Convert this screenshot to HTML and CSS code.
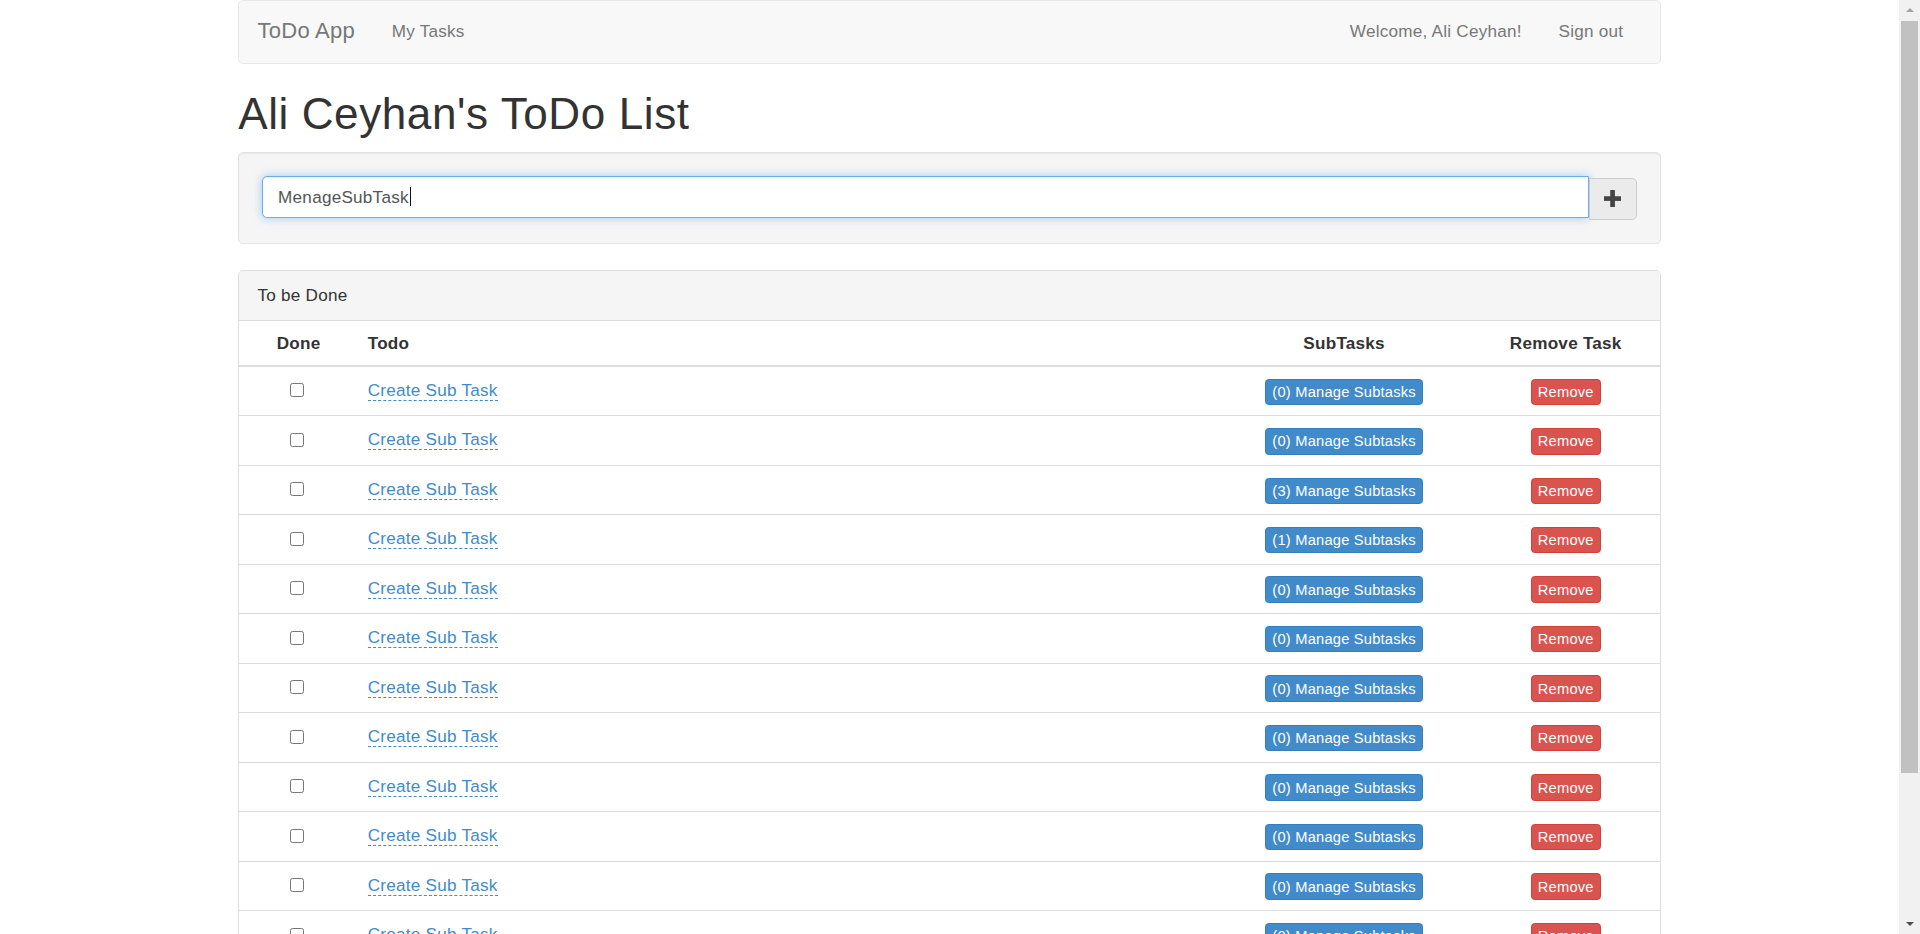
FILE: index.html
```html
<!DOCTYPE html>
<html lang="en">
<head>
<meta charset="utf-8">
<title>ToDo App</title>
<link rel="stylesheet" href="styles.css">
</head>
<body>
<div class="page">
  <div class="viewport">
    <div class="container">
      <nav class="navbar">
        <div class="nav-group">
          <a class="brand">ToDo App</a>
          <a class="nav-link">My Tasks</a>
        </div>
        <div class="nav-group">
          <a class="nav-link">Welcome, Ali Ceyhan!</a>
          <a class="nav-link">Sign out</a>
        </div>
      </nav>

      <h1 class="title">Ali Ceyhan's ToDo List</h1>

      <div class="well">
        <div class="input-group">
          <div class="form-control">MenageSubTask<span class="caret"></span></div>
          <button class="btn-add" type="button">
            <svg class="plus" viewBox="0 0 14 14" width="14" height="14"><rect x="0" y="5.1" width="14" height="3.8"/><rect x="5.1" y="0" width="3.8" height="14"/></svg>
          </button>
        </div>
      </div>

      <div class="panel">
        <div class="panel-heading">To be Done</div>
        <table class="table">
          <colgroup>
            <col class="c-done"><col><col class="c-sub"><col class="c-rm">
          </colgroup>
          <thead>
            <tr>
              <th class="center">Done</th>
              <th>Todo</th>
              <th class="center">SubTasks</th>
              <th class="center">Remove Task</th>
            </tr>
          </thead>
          <tbody>
            <tr><td><input class="chk" type="checkbox"></td><td><a class="editable">Create Sub Task</a></td><td class="center"><button class="btn btn-primary">(0) Manage Subtasks</button></td><td class="center"><button class="btn btn-danger">Remove</button></td></tr>
            <tr><td><input class="chk" type="checkbox"></td><td><a class="editable">Create Sub Task</a></td><td class="center"><button class="btn btn-primary">(0) Manage Subtasks</button></td><td class="center"><button class="btn btn-danger">Remove</button></td></tr>
            <tr><td><input class="chk" type="checkbox"></td><td><a class="editable">Create Sub Task</a></td><td class="center"><button class="btn btn-primary">(3) Manage Subtasks</button></td><td class="center"><button class="btn btn-danger">Remove</button></td></tr>
            <tr><td><input class="chk" type="checkbox"></td><td><a class="editable">Create Sub Task</a></td><td class="center"><button class="btn btn-primary">(1) Manage Subtasks</button></td><td class="center"><button class="btn btn-danger">Remove</button></td></tr>
            <tr><td><input class="chk" type="checkbox"></td><td><a class="editable">Create Sub Task</a></td><td class="center"><button class="btn btn-primary">(0) Manage Subtasks</button></td><td class="center"><button class="btn btn-danger">Remove</button></td></tr>
            <tr><td><input class="chk" type="checkbox"></td><td><a class="editable">Create Sub Task</a></td><td class="center"><button class="btn btn-primary">(0) Manage Subtasks</button></td><td class="center"><button class="btn btn-danger">Remove</button></td></tr>
            <tr><td><input class="chk" type="checkbox"></td><td><a class="editable">Create Sub Task</a></td><td class="center"><button class="btn btn-primary">(0) Manage Subtasks</button></td><td class="center"><button class="btn btn-danger">Remove</button></td></tr>
            <tr><td><input class="chk" type="checkbox"></td><td><a class="editable">Create Sub Task</a></td><td class="center"><button class="btn btn-primary">(0) Manage Subtasks</button></td><td class="center"><button class="btn btn-danger">Remove</button></td></tr>
            <tr><td><input class="chk" type="checkbox"></td><td><a class="editable">Create Sub Task</a></td><td class="center"><button class="btn btn-primary">(0) Manage Subtasks</button></td><td class="center"><button class="btn btn-danger">Remove</button></td></tr>
            <tr><td><input class="chk" type="checkbox"></td><td><a class="editable">Create Sub Task</a></td><td class="center"><button class="btn btn-primary">(0) Manage Subtasks</button></td><td class="center"><button class="btn btn-danger">Remove</button></td></tr>
            <tr><td><input class="chk" type="checkbox"></td><td><a class="editable">Create Sub Task</a></td><td class="center"><button class="btn btn-primary">(0) Manage Subtasks</button></td><td class="center"><button class="btn btn-danger">Remove</button></td></tr>
            <tr><td><input class="chk" type="checkbox"></td><td><a class="editable">Create Sub Task</a></td><td class="center"><button class="btn btn-primary">(0) Manage Subtasks</button></td><td class="center"><button class="btn btn-danger">Remove</button></td></tr>
            <tr><td><input class="chk" type="checkbox"></td><td><a class="editable">Create Sub Task</a></td><td class="center"><button class="btn btn-primary">(0) Manage Subtasks</button></td><td class="center"><button class="btn btn-danger">Remove</button></td></tr>
          </tbody>
        </table>
      </div>
    </div>
  </div>

  <div class="scrollbar">
    <div class="sb-btn"><span class="arrow-up"></span></div>
    <div class="sb-thumb"></div>
    <div class="sb-track"></div>
    <div class="sb-btn"><span class="arrow-down"></span></div>
  </div>
</div>
</body>
</html>
```

FILE: styles.css
```css
html, body {
  margin: 0;
  padding: 0;
  overflow: hidden;
  background: #fff;
}

* {
  box-sizing: border-box;
}

body {
  font-family: "Liberation Sans", Arial, Helvetica, sans-serif;
}

.page {
  zoom: 1.2245;
  width: 1568px;
  height: 763px;
  display: flex;
  overflow: hidden;
  color: #333;
  font-size: 14px;
  line-height: 1.42857;
  letter-spacing: 0.014em;
}

.viewport {
  width: 1551px;
  height: 763px;
  overflow: hidden;
  flex: none;
}

.container {
  width: 1162px;
  margin: 0 auto;
}

/* Navbar */
.navbar {
  display: flex;
  justify-content: space-between;
  height: 52px;
  border: 1px solid #e7e7e7;
  border-radius: 4px;
  background: #f8f8f8;
  padding-right: 15px;
  margin-bottom: 21.8px;
}

.nav-group {
  display: flex;
}

.brand {
  padding: 15px;
  font-size: 18px;
  line-height: 20px;
  color: #777;
}

.nav-link {
  padding: 15px;
  line-height: 20px;
  color: #777;
}

/* Title */
.title {
  margin: 0 0 10.5px;
  font-size: 36px;
  line-height: 1.1;
  font-weight: normal;
  color: #333;
  letter-spacing: 0.013em;
}

/* Well + input */
.well {
  padding: 19px;
  background: #f5f5f5;
  border: 1px solid #e3e3e3;
  border-radius: 4px;
  box-shadow: inset 0 1px 1px rgba(0, 0, 0, 0.05);
  margin-bottom: 21.4px;
}

.input-group {
  display: flex;
  align-items: flex-start;
}

.form-control {
  flex: 1;
  height: 34px;
  padding: 6px 12px;
  font-size: 14px;
  line-height: 20px;
  color: #555;
  background: #fff;
  border: 1px solid #66afe9;
  border-radius: 4px 0 0 4px;
  box-shadow: inset 0 1px 1px rgba(0, 0, 0, 0.075), 0 0 8px rgba(102, 175, 233, 0.6);
  display: flex;
  align-items: center;
}

.caret {
  display: inline-block;
  width: 1px;
  height: 15.5px;
  background: #111;
  margin-left: 1px;
}

.btn-add {
  width: 39px;
  height: 34px;
  margin-top: 1.6px;
  padding: 0;
  border: 1px solid #ccc;
  border-radius: 0 4px 4px 0;
  background: #ebebeb;
  display: flex;
  align-items: center;
  justify-content: center;
}

.plus {
  fill: #444;
  display: block;
}

/* Panel */
.panel {
  border: 1px solid #ddd;
  border-radius: 4px;
  background: #fff;
}

.panel-heading {
  padding: 10px 15px;
  line-height: 20px;
  background: #f5f5f5;
  border-bottom: 1px solid #ddd;
  border-radius: 3px 3px 0 0;
  color: #333;
}

.table {
  width: 100%;
  table-layout: fixed;
  border-collapse: separate;
  border-spacing: 0;
}

.c-done { width: 97px; }
.c-sub { width: 208px; }
.c-rm { width: 154px; }

.table th {
  padding: 8px;
  line-height: 20px;
  font-weight: bold;
  text-align: left;
  border-bottom: 2px solid #ddd;
  vertical-align: bottom;
}

.table tbody tr {
  height: 40.4px;
}

.table td {
  padding: 9px 8px 0;
  line-height: 20px;
  border-bottom: 1px solid #ddd;
  vertical-align: top;
}

.table .center {
  text-align: center;
}

.chk {
  appearance: none;
  -webkit-appearance: none;
  display: block;
  width: 11.5px;
  height: 11.5px;
  margin: 4.4px auto 0;
  padding: 0;
  border: 1px solid #767676;
  border-radius: 2px;
  background: #fff;
  position: relative;
  left: -1px;
}

.editable {
  color: #428bca;
  text-decoration: none;
  border-bottom: 1px dashed #428bca;
}

.btn {
  display: inline-block;
  padding: 1px 5px;
  font-family: inherit;
  font-size: 12px;
  line-height: 1.5;
  letter-spacing: 0.014em;
  border: 1px solid transparent;
  border-radius: 3px;
  color: #fff;
  vertical-align: top;
  margin-top: 0.5px;
}

.btn-primary {
  background: #428bca;
  border-color: #357ebd;
}

.btn-danger {
  background: #d9534f;
  border-color: #d43f3a;
}

/* Scrollbar */
.scrollbar {
  width: 17px;
  height: 763px;
  flex: none;
  background: #f1f1f1;
  display: flex;
  flex-direction: column;
  align-items: center;
}

.sb-btn {
  width: 17px;
  height: 17px;
  flex: none;
  display: flex;
  align-items: center;
  justify-content: center;
}

.arrow-up {
  width: 0;
  height: 0;
  border-left: 3.7px solid transparent;
  border-right: 3.7px solid transparent;
  border-bottom: 4px solid #a3a3a3;
}

.arrow-down {
  width: 0;
  height: 0;
  border-left: 3.7px solid transparent;
  border-right: 3.7px solid transparent;
  border-top: 4px solid #505050;
}

.sb-thumb {
  width: 14px;
  height: 614px;
  flex: none;
  background: #c1c1c1;
}

.sb-track {
  flex: 1;
}
```
